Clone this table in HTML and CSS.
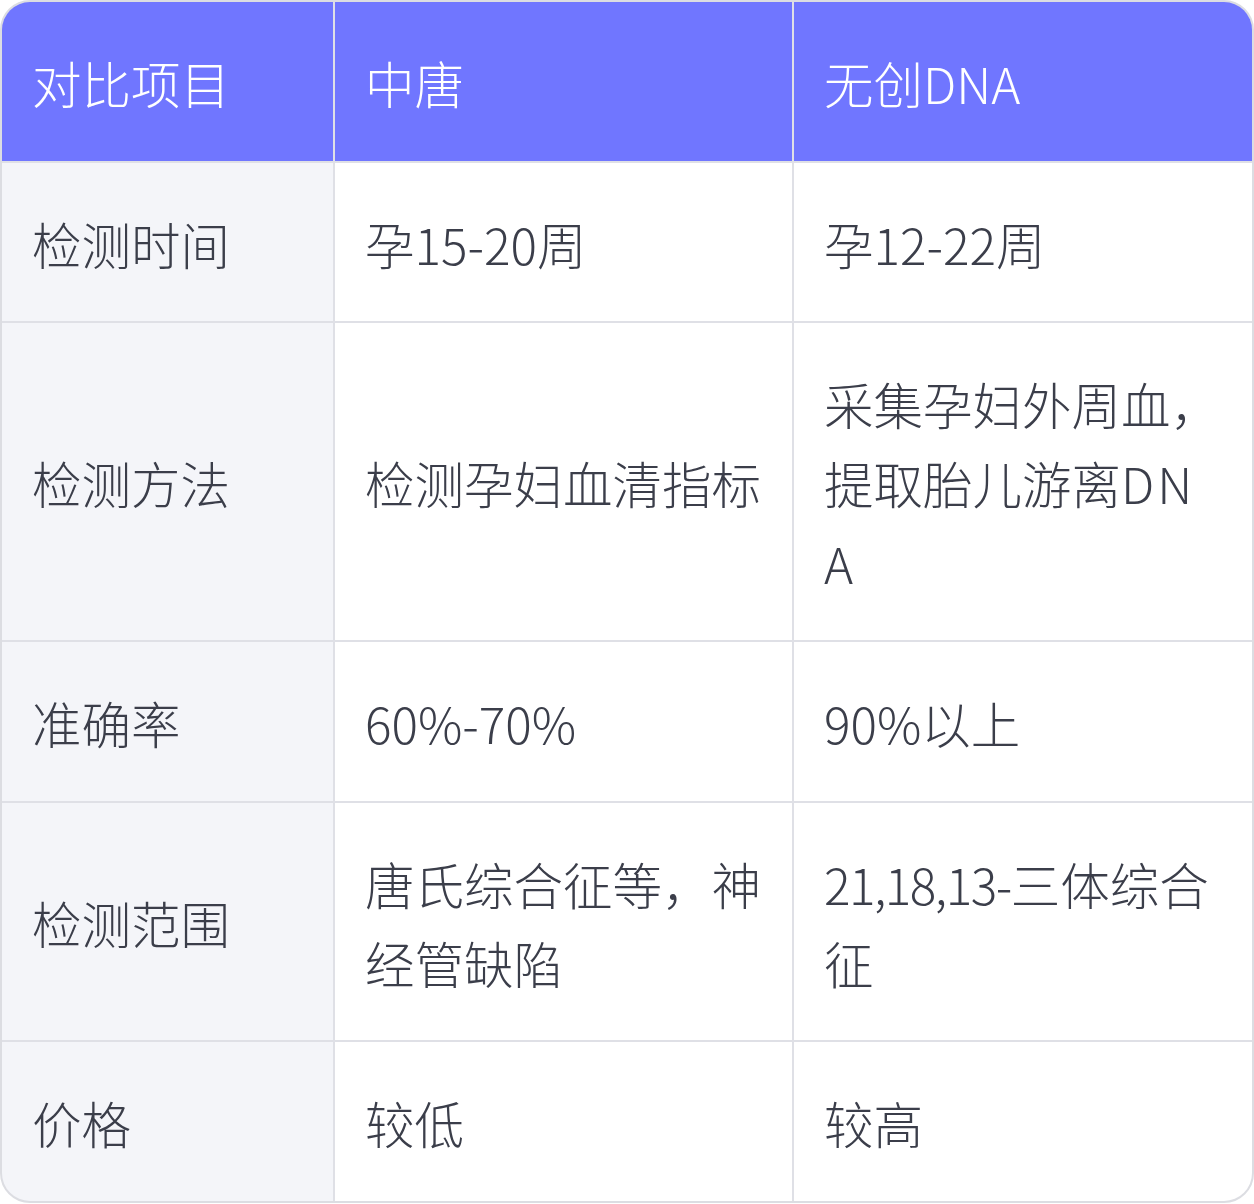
FILE: index.html
```html
<!DOCTYPE html>
<html lang="zh-CN">
<head>
<meta charset="utf-8">
<link rel="stylesheet" href="styles.css">
</head>
<body>
<div class="table">
  <div class="cell head"><span class="txt">对比项目</span></div>
  <div class="cell head"><span class="txt">中唐</span></div>
  <div class="cell head last"><span class="txt">无创DNA</span></div>

  <div class="cell label"><span class="txt">检测时间</span></div>
  <div class="cell"><span class="txt">孕15-20周</span></div>
  <div class="cell last"><span class="txt">孕12-22周</span></div>

  <div class="cell label"><span class="txt">检测方法</span></div>
  <div class="cell"><span class="txt">检测孕妇血清指标</span></div>
  <div class="cell last"><span class="txt">采集孕妇外周血，提取胎儿游离<span class="wide">DNA</span></span></div>

  <div class="cell label"><span class="txt">准确率</span></div>
  <div class="cell"><span class="txt">60%-70%</span></div>
  <div class="cell last"><span class="txt">90%以上</span></div>

  <div class="cell label"><span class="txt">检测范围</span></div>
  <div class="cell"><span class="txt">唐氏综合征等，神经管缺陷</span></div>
  <div class="cell last"><span class="txt"><span class="tight">21,18,13-</span>三体综合征</span></div>

  <div class="cell label"><span class="txt">价格</span></div>
  <div class="cell"><span class="txt">较低</span></div>
  <div class="cell last"><span class="txt">较高</span></div>
</div>
</body>
</html>
```

FILE: styles.css
```css
html, body {
  margin: 0;
  padding: 0;
  background: #ffffff;
}

body {
  font-family: "Noto Sans CJK SC", sans-serif;
  font-weight: 200;
}

.table {
  width: 1254px;
  box-sizing: border-box;
  border: 2px solid #dcdde2;
  border-radius: 30px;
  overflow: hidden;
  display: grid;
  grid-template-columns: 331px 457px 458px;
  gap: 2px;
  background: #dfe0e6;
}

.cell {
  background: #ffffff;
  color: #3b3e4a;
  font-size: 49.5px;
  line-height: 79.25px;
  padding: 41px 30px 38.25px 30px;
  display: flex;
  align-items: center;
  min-width: 0;
}

.txt {
  display: block;
  min-width: 0;
  word-break: break-all;
}

.cell.last {
  padding-right: 32px;
}

.cell.label {
  background: #f4f5f9;
}

.cell.head {
  background: #7076ff;
  color: #ffffff;
}

.wide {
  letter-spacing: 3px;
}

.tight {
  letter-spacing: -1.5px;
}
```
